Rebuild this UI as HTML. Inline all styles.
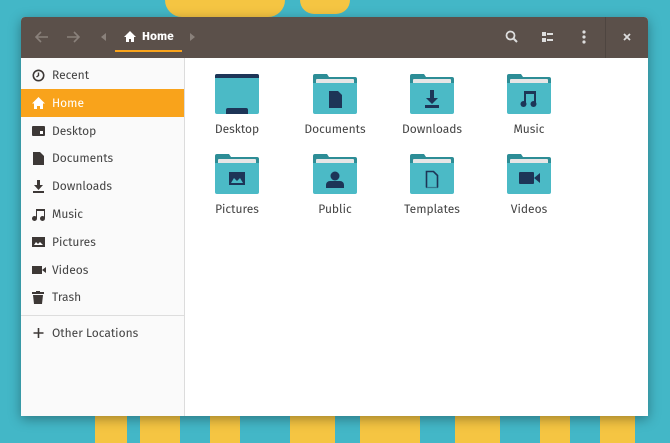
<!DOCTYPE html><html><head><style>
body{margin:0;width:670px;height:443px;overflow:hidden;background:#43b7c7;font-family:"Fira Sans","Liberation Sans",sans-serif;position:relative}
.y{position:absolute;background:#f5c542}
.win{position:absolute;left:21px;top:17px;width:627px;height:399px;background:#fff;border-radius:4px 4px 0 0;box-shadow:0 3px 12px rgba(0,0,0,.35);overflow:hidden}
.hb{position:absolute;left:0;top:0;width:627px;height:41px;background:#5b504a}
.sb{position:absolute;left:0;top:41px;width:163px;height:358px;background:#fafafa;border-right:1px solid #dcdcdc}
.it{position:absolute;left:0;width:163px;height:28px;font-size:12px;color:#444;line-height:30px}
.it span{position:absolute;left:31px}
.it svg{position:absolute;left:11px;top:8px}
.act{background:#f9a31b;color:#fff}
.f{position:absolute;width:80px;text-align:center;font-size:12px;color:#444}
.f svg{display:block;margin:0 auto 9px}
</style></head><body>
<div class="y" style="left:165px;top:0;width:120px;height:17px;border-radius:0 0 30px 30px"></div>
<div class="y" style="left:300px;top:0;width:50px;height:14px;border-radius:0 0 20px 20px"></div>
<div class="y" style="left:95px;top:416px;width:32px;height:27px"></div>
<div class="y" style="left:140px;top:416px;width:40px;height:27px"></div>
<div class="y" style="left:210px;top:416px;width:30px;height:27px"></div>
<div class="y" style="left:290px;top:416px;width:45px;height:27px"></div>
<div class="y" style="left:360px;top:416px;width:60px;height:27px"></div>
<div class="y" style="left:455px;top:416px;width:45px;height:27px"></div>
<div class="y" style="left:540px;top:416px;width:30px;height:27px"></div>
<div class="y" style="left:600px;top:416px;width:35px;height:27px"></div>
<svg width="0" height="0" style="position:absolute"><defs>
<symbol id="fd" viewBox="0 0 44 40"><path d="M0 2a2 2 0 0 1 2-2h12l2 3h26a2 2 0 0 1 2 2v10H0z" fill="#2d8d96"/><rect x="3" y="5" width="38" height="8" rx="1" fill="#e6e6e6"/><path d="M0 9h44v29a2 2 0 0 1-2 2H2a2 2 0 0 1-2-2z" fill="#4bbac6"/></symbol>
</defs></svg>
<div class="win">
<div class="hb">
<svg style="position:absolute;left:14px;top:14px" width="14" height="12"><path d="M13 6H2M6 1 1 6l5 5" stroke="#8a817b" stroke-width="1.6" fill="none"/></svg>
<svg style="position:absolute;left:45px;top:14px" width="14" height="12"><path d="M1 6h11M8 1l5 5-5 5" stroke="#8a817b" stroke-width="1.6" fill="none"/></svg>
<svg style="position:absolute;left:80px;top:16px" width="5" height="8"><path d="M5 0v8L0 4z" fill="#8a817b"/></svg>
<svg style="position:absolute;left:103px;top:14px" width="12" height="11"><path d="M6 0 0 6h2v5h3V8h2v3h3V6h2z" fill="#fff"/></svg>
<div style="position:absolute;left:121px;top:13px;color:#fff;font-size:12px;font-weight:bold">Home</div>
<div style="position:absolute;left:94px;top:33px;width:67px;height:2px;background:#f9a31b"></div>
<svg style="position:absolute;left:169px;top:16px" width="5" height="8"><path d="M0 0v8l5-4z" fill="#8a817b"/></svg>
<svg style="position:absolute;left:484px;top:13px" width="14" height="14"><circle cx="5.5" cy="5.5" r="4" stroke="#ddd" stroke-width="1.8" fill="none"/><path d="M8.5 8.5 12 12" stroke="#ddd" stroke-width="2"/></svg>
<svg style="position:absolute;left:521px;top:15px" width="12" height="10"><rect x="0" y="0" width="4" height="4" fill="#ddd"/><rect x="0" y="6" width="4" height="4" fill="#ddd"/><rect x="5" y="1" width="6" height="2" fill="#ddd"/><rect x="5" y="7" width="6" height="2" fill="#ddd"/></svg>
<svg style="position:absolute;left:561px;top:13px" width="4" height="14"><circle cx="2" cy="2" r="1.6" fill="#ddd"/><circle cx="2" cy="7" r="1.6" fill="#ddd"/><circle cx="2" cy="12" r="1.6" fill="#ddd"/></svg>
<div style="position:absolute;left:584px;top:0;width:1px;height:41px;background:#4e4540"></div>
<svg style="position:absolute;left:602px;top:16px" width="8" height="8"><path d="M1 1l6 6M7 1 1 7" stroke="#ddd" stroke-width="1.8"/></svg>
</div>
<div class="sb">
<div class="it" style="top:3px"><svg width="13" height="13"><circle cx="6.5" cy="6.5" r="5.2" stroke="#3d3836" stroke-width="1.6" fill="none"/><path d="M6.5 3.5v3l-2 1.5" stroke="#3d3836" stroke-width="1.4" fill="none"/></svg><span>Recent</span></div>
<div class="it act" style="top:31px"><svg width="13" height="12"><path d="M6.5 0 0 6.5h2V12h3V9h3v3h3V6.5h2z" fill="#fff"/></svg><span>Home</span></div>
<div class="it" style="top:59px"><svg width="13" height="12"><rect y="1" width="13" height="10" rx="1" fill="#3d3836"/><rect x="8" y="6" width="3" height="3" fill="#fff"/></svg><span>Desktop</span></div>
<div class="it" style="top:86px"><svg width="13" height="13"><path d="M1 0h7l4 4v9H1z" fill="#3d3836"/></svg><span>Documents</span></div>
<div class="it" style="top:114px"><svg width="13" height="13"><path d="M5 0h3v5h3l-4.5 5L2 5h3z M1 11h11v2H1z" fill="#3d3836"/></svg><span>Downloads</span></div>
<div class="it" style="top:142px"><svg width="13" height="13"><path d="M4 1h9v9h-1V3H5v7H4z" fill="#3d3836"/><circle cx="2.5" cy="10.5" r="2.5" fill="#3d3836"/><circle cx="10.5" cy="10.5" r="2.5" fill="#3d3836"/><rect x="4" y="1" width="9" height="2" fill="#3d3836"/></svg><span>Music</span></div>
<div class="it" style="top:170px"><svg width="13" height="12"><rect y="1" width="13" height="10" fill="#3d3836"/><path d="M2 9l2-3 2 2 2-2 3 3z" fill="#fff"/></svg><span>Pictures</span></div>
<div class="it" style="top:198px"><svg width="14" height="12"><rect y="2" width="10" height="8" fill="#3d3836"/><path d="M10 6l4-3v6z" fill="#3d3836"/></svg><span>Videos</span></div>
<div class="it" style="top:225px"><svg width="13" height="13"><rect x="0" y="1" width="12" height="2" fill="#3d3836"/><rect x="4" y="0" width="4" height="2" fill="#3d3836"/><path d="M1 4h10l-1 9H2z" fill="#3d3836"/></svg><span>Trash</span></div>
<div style="position:absolute;left:0;top:257px;width:163px;height:1px;background:#ddd"></div>
<div class="it" style="top:261px"><svg width="13" height="13"><path d="M6.5 1v10M1.5 6h10" stroke="#3d3836" stroke-width="1.6"/></svg><span>Other Locations</span></div>
</div>
<div class="f" style="left:176px;top:57px"><svg width="44" height="40" viewBox="0 0 44 40"><path d="M0 2a2 2 0 0 1 2-2h40a2 2 0 0 1 2 2v36a2 2 0 0 1-2 2H2a2 2 0 0 1-2-2z" fill="#4bbac6"/><path d="M0 2a2 2 0 0 1 2-2h40a2 2 0 0 1 2 2v2H0z" fill="#1d3557"/><path d="M11 36a2 2 0 0 1 2-2h18a2 2 0 0 1 2 2v4H11z" fill="#1d3557"/></svg>Desktop</div>
<div class="f" style="left:274px;top:57px"><svg width="44" height="40"><use href="#fd"/><path d="M16 17h9l4 4v13H16z" fill="#1d3557"/></svg>Documents</div>
<div class="f" style="left:371px;top:57px"><svg width="44" height="40"><use href="#fd"/><path d="M20 16h4v8h4l-6 6-6-6h4z M15 31h14v3H15z" fill="#1d3557"/></svg>Downloads</div>
<div class="f" style="left:468px;top:57px"><svg width="44" height="40"><use href="#fd"/><path d="M17 17h12v13h-2V20h-8v10h-2z" fill="#1d3557"/><circle cx="16.5" cy="30" r="3" fill="#1d3557"/><circle cx="26.5" cy="30" r="3" fill="#1d3557"/></svg>Music</div>
<div class="f" style="left:176px;top:137px"><svg width="44" height="40"><use href="#fd"/><rect x="14" y="18" width="16" height="13" fill="#1d3557"/><path d="M16 29l3-5 3 3 3-3 3 5z" fill="#4bbac6"/></svg>Pictures</div>
<div class="f" style="left:274px;top:137px"><svg width="44" height="40"><use href="#fd"/><circle cx="22" cy="22" r="4.5" fill="#1d3557"/><path d="M13 34v-3a4 4 0 0 1 4-4h10a4 4 0 0 1 4 4v3z" fill="#1d3557"/></svg>Public</div>
<div class="f" style="left:371px;top:137px"><svg width="44" height="40"><use href="#fd"/><path d="M16.5 33.5V17.5h7l4 4v12" fill="none" stroke="#1d3557" stroke-width="1.6"/><path d="M16.5 33.5h11" fill="none" stroke="#1d3557" stroke-width="1.2" stroke-dasharray="1 1"/></svg>Templates</div>
<div class="f" style="left:468px;top:137px"><svg width="44" height="40"><use href="#fd"/><rect x="12" y="18" width="15" height="12" rx="1" fill="#1d3557"/><path d="M27 24l6-5v10z" fill="#1d3557"/></svg>Videos</div>
</div>
</body></html>
